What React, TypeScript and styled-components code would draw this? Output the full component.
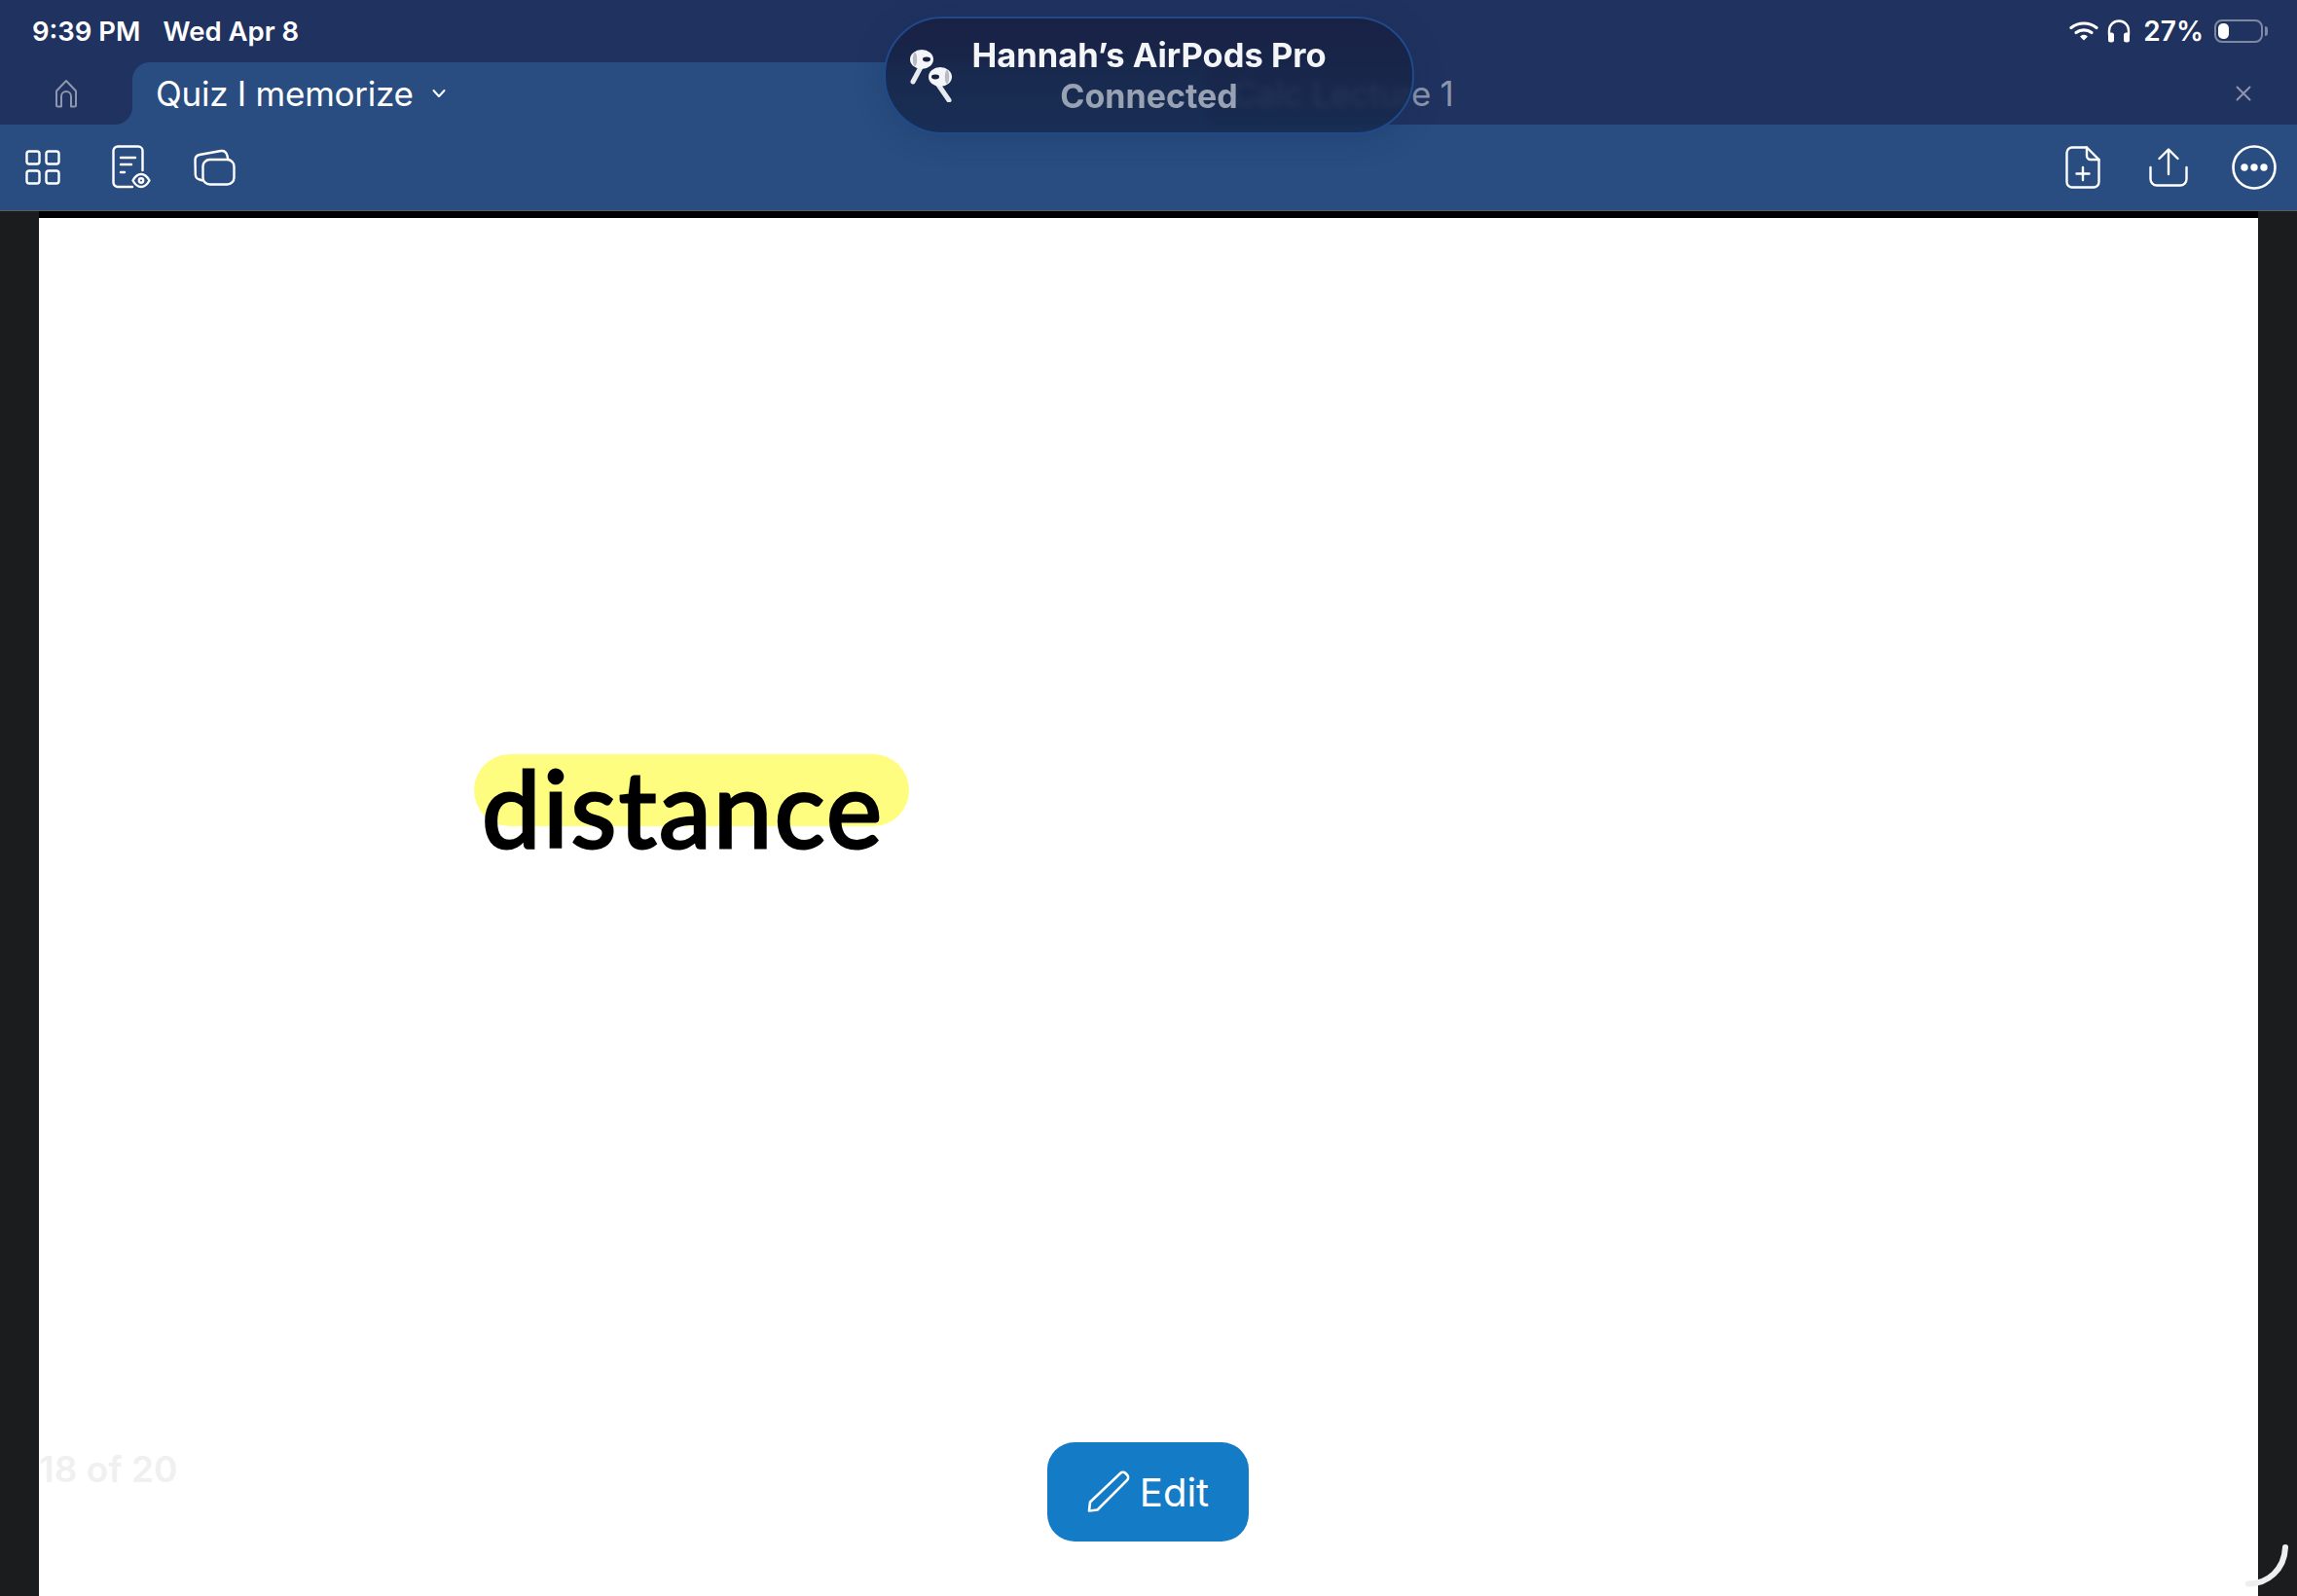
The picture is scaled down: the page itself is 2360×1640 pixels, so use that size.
import styled, { createGlobalStyle } from "styled-components";

const GlobalStyle = createGlobalStyle`
  html, body {
    margin: 0;
    padding: 0;
    width: 2360px;
    height: 1640px;
    overflow: hidden;
    background: #1b1c1e;
    font-family: "Inter", "Liberation Sans", sans-serif;
  }
`;

const Root = styled.div`
  position: relative;
  width: 2360px;
  height: 1640px;
  display: flex;
  flex-direction: column;
  overflow: hidden;
`;

const StatusBar = styled.div`
  height: 64px;
  background: #20325f;
  color: #fff;
  display: flex;
  align-items: center;
  justify-content: space-between;
  padding: 0 30px 0 33px;
  font-size: 27.5px;
  font-weight: 600;
`;

const StatusGroup = styled.div`
  display: flex;
  align-items: center;
`;

const DateText = styled.span`
  margin-left: 23px;
`;

const WifiSlot = styled.span`
  display: flex;
  margin-right: 9px;
`;

const Percent = styled.span`
  margin: 0 11px 0 13px;
  font-size: 28px;
`;

const Battery = styled.div`
  width: 50px;
  height: 24px;
  border: 2px solid rgba(255, 255, 255, 0.42);
  border-radius: 8px;
  box-sizing: border-box;
  padding: 2px;
  margin-right: 5px;
  display: flex;
  position: relative;

  &::after {
    content: "";
    position: absolute;
    right: -7px;
    top: 5px;
    width: 3px;
    height: 10px;
    background: rgba(255, 255, 255, 0.42);
    border-radius: 0 3px 3px 0;
  }
`;

const BatteryFill = styled.div`
  width: 11px;
  background: #fff;
  border-radius: 5px;
`;

const TabRow = styled.div`
  height: 64px;
  background: #20325f;
  display: flex;
  position: relative;
`;

const HomeSlot = styled.div`
  width: 136px;
  background: #294d80;
  flex: none;
`;

const HomeTab = styled.div`
  height: 100%;
  background: #20325f;
  border-bottom-right-radius: 18px;
  display: flex;
  align-items: center;
  padding-left: 56px;
  color: #8d96ad;
`;

const ActiveTab = styled.div`
  width: 1104px;
  flex: none;
  background: #294d80;
  border-top-left-radius: 18px;
  display: flex;
  align-items: center;
  padding-left: 24px;
  box-sizing: border-box;
  color: #fff;
  font-size: 35px;
  letter-spacing: -0.25px;
  gap: 19px;
`;

const InactiveTab = styled.div`
  flex: 1;
  display: flex;
  align-items: center;
  justify-content: space-between;
  padding: 0 47px 0 26px;
  color: #8d96ad;
  font-size: 35px;
  letter-spacing: -0.4px;
`;

const Toolbar = styled.div`
  height: 88px;
  background: #294d80;
  display: flex;
  justify-content: space-between;
`;

const ToolGroup = styled.div`
  display: flex;
`;

const ToolButton = styled.div<{ $width?: number }>`
  width: ${(p) => p.$width ?? 88}px;
  height: 88px;
  display: flex;
  align-items: center;
  justify-content: center;
  color: #fff;
`;

const Viewer = styled.div`
  flex: 1;
  background: #1b1c1e;
  border-top: 1px solid #5a5d63;
  padding: 0 40px;
  display: flex;
`;

const Page = styled.div`
  flex: 1;
  position: relative;
  background: #fff;
  border-top: 7px solid #000;
`;

const Highlight = styled.div`
  position: absolute;
  left: 447px;
  top: 551px;
  width: 447px;
  height: 74px;
  background: #fffd80;
  border-radius: 37px;
`;

const Ink = styled.div`
  position: absolute;
  left: 455px;
  top: 540px;
  font-family: "Lato", "Liberation Sans", sans-serif;
  font-size: 108px;
  line-height: 130px;
  letter-spacing: 2.5px;
  color: #000;
  -webkit-text-stroke: 3px #000;
`;

const Counter = styled.div`
  position: absolute;
  left: 0;
  top: 1263px;
  font-size: 37px;
  line-height: 46px;
  font-weight: 600;
  color: #f0f0f1;
`;

const EditButton = styled.div`
  position: absolute;
  left: 1036px;
  top: 1258px;
  width: 207px;
  height: 102px;
  border-radius: 28px;
  background: #147bc6;
  color: #fff;
  font-size: 40px;
  display: flex;
  align-items: center;
  justify-content: center;
  gap: 10px;
`;

const Pill = styled.div`
  position: absolute;
  left: 908px;
  top: 17px;
  width: 545px;
  height: 121px;
  box-sizing: border-box;
  border-radius: 60px;
  border: 2px solid #1f4a8c;
  background: linear-gradient(180deg, rgba(24, 32, 66, 0.9), rgba(22, 42, 78, 0.86));
  backdrop-filter: blur(3px);
  box-shadow: 0 4px 30px rgba(20, 40, 80, 0.25);
  display: grid;
  grid-template-columns: 1fr auto 1fr;
  align-items: center;
`;

const PodsSlot = styled.div`
  padding-left: 25px;
  display: flex;
`;

const PillText = styled.div`
  display: flex;
  flex-direction: column;
  align-items: center;
  font-weight: 700;
  font-size: 34.5px;
  line-height: 42px;
`;

const PillTitle = styled.span`
  color: #f4f5f8;
`;

const PillSub = styled.span`
  color: #98a2b3;
  font-size: 34px;
`;

const PencilArc = styled.svg`
  position: absolute;
  right: 0;
  bottom: 0;
`;

const HomeIcon = () => (
  <svg width="24" height="30" viewBox="0 0 24 30" fill="none" stroke="currentColor" strokeWidth="2">
    <path d="M2 27V12.5L12 2l10 10.5V27a1.5 1.5 0 0 1-1.5 1.5H17V18a5 5 0 0 0-10 0v10.500H3.500A1.500 1.500 0 0 1 2 27z" strokeLinejoin="round" />
  </svg>
);

const Chevron = () => (
  <svg width="14" height="10" viewBox="0 0 14 10" fill="none" stroke="#fff" strokeWidth="2" strokeLinecap="round" strokeLinejoin="round">
    <path d="M1.500 2l5.500 6 5.500-6" />
  </svg>
);

const GridIcon = () => (
  <svg width="36" height="36" viewBox="0 0 36 36" fill="none" stroke="currentColor" strokeWidth="2.400">
    <rect x="1.500" y="1.500" width="13" height="13" rx="2.500" />
    <rect x="21.500" y="1.500" width="13" height="13" rx="2.500" />
    <rect x="1.500" y="21.500" width="13" height="13" rx="2.500" />
    <rect x="21.500" y="21.500" width="13" height="13" rx="2.500" />
  </svg>
);

const DocEyeIcon = () => (
  <svg width="40" height="46" viewBox="0 0 40 46" fill="none" stroke="currentColor" strokeWidth="2.400" strokeLinecap="round" strokeLinejoin="round">
    <path d="M21 43H6a4.500 4.500 0 0 1-4.500-4.500V6A4.500 4.500 0 0 1 6 1.500h21A4.500 4.500 0 0 1 31.500 6v20" />
    <path d="M9 13h15M9 20h11M9 28h4" />
    <path d="M21.500 36.500c2.500-4.500 5.500-6.500 8.500-6.500s6 2 8.500 6.500c-2.500 4.500-5.500 6.500-8.500 6.500s-6-2-8.500-6.500z" />
    <circle cx="30" cy="36.500" r="2.200" />
  </svg>
);

const StackIcon = () => (
  <svg width="43" height="38" viewBox="0 0 43 38" fill="none" stroke="currentColor" strokeWidth="2.400" strokeLinejoin="round">
    <rect x="9.500" y="11" width="32" height="25.500" rx="7" />
    <path d="M9.500 32.500 6 31.500C3.500 31 2 29 1.800 26.500L1.500 12C1.400 8.500 3 6.500 6 6L28 2c3.500-.5 5.500 1.500 6.500 5l.8 4" />
  </svg>
);

const FilePlusIcon = () => (
  <svg width="36" height="44" viewBox="0 0 36 44" fill="none" stroke="currentColor" strokeWidth="2.400" strokeLinecap="round" strokeLinejoin="round">
    <path d="M22 1.500H7A5.500 5.500 0 0 0 1.500 7v30A5.500 5.500 0 0 0 7 42.500h22a5.500 5.500 0 0 0 5.500-5.500V14z" />
    <path d="M22 1.500V10a4 4 0 0 0 4 4h8.500" />
    <path d="M18 22v13M11.500 28.500h13" />
  </svg>
);

const ShareIcon = () => (
  <svg width="40" height="40" viewBox="0 0 40 40" fill="none" stroke="currentColor" strokeWidth="2.400" strokeLinecap="round" strokeLinejoin="round">
    <path d="M20 27V2M10.500 11 20 1.500 29.500 11" />
    <path d="M1.500 20v12a6.500 6.500 0 0 0 6.500 6.500h24a6.500 6.500 0 0 0 6.500-6.500V20" />
  </svg>
);

const MoreIcon = () => (
  <svg width="46" height="46" viewBox="0 0 46 46" fill="none">
    <circle cx="23" cy="23" r="21.500" stroke="currentColor" strokeWidth="2.600" />
    <circle cx="13" cy="23" r="3.700" fill="currentColor" />
    <circle cx="23" cy="23" r="3.700" fill="currentColor" />
    <circle cx="33" cy="23" r="3.700" fill="currentColor" />
  </svg>
);

const WifiIcon = () => (
  <svg width="30" height="20" viewBox="0 0 30 20" fill="none" stroke="#fff" strokeWidth="3.200" strokeLinecap="round">
    <path d="M2 6.500C9.500.5 20.500.5 28 6.500" />
    <path d="M7 11.500c4.500-3.500 11.500-3.500 16 0" />
    <path d="M15 18.500l-3-3c1.800-1.300 4.200-1.300 6 0z" fill="#fff" strokeWidth="1.500" strokeLinejoin="round" />
  </svg>
);

const HeadphonesIcon = () => (
  <svg width="24" height="24" viewBox="0 0 24 24" fill="none">
    <path d="M2 16v-4.500a10 10 0 0 1 20 0V16" stroke="#fff" strokeWidth="2.400" />
    <rect x="1" y="13.500" width="6" height="10" rx="2.500" fill="#fff" />
    <rect x="17" y="13.500" width="6" height="10" rx="2.500" fill="#fff" />
  </svg>
);

const CloseIcon = () => (
  <svg width="16" height="16" viewBox="0 0 16 16" fill="none" stroke="currentColor" strokeWidth="2" strokeLinecap="round">
    <path d="M1.500 1.500l13 13M14.500 1.500l-13 13" />
  </svg>
);

const PencilIcon = () => (
  <svg width="44" height="44" viewBox="0 0 44 44" fill="none" stroke="#fff" strokeWidth="2.600" strokeLinejoin="round">
    <path d="M2 41.500 3 32.500 34 3a4 4 0 0 1 5.500 0l1.500 1.500a4 4 0 0 1 0 5.500L10.500 40.500z" />
  </svg>
);

const AirPodsIcon = () => (
  <svg width="44" height="54" viewBox="0 0 44 54">
    <path d="M11 18 3 33" stroke="#e9eaee" strokeWidth="5" strokeLinecap="round" />
    <ellipse cx="12" cy="10" rx="12" ry="10" fill="#f4f5f8" />
    <ellipse cx="17" cy="10" rx="4" ry="2.400" fill="#15203f" />
    <ellipse cx="5" cy="10" rx="2.200" ry="7" fill="#b9bbc2" />
    <path d="M29 36 40 52" stroke="#e9eaee" strokeWidth="5" strokeLinecap="round" />
    <ellipse cx="31" cy="28" rx="12" ry="10" fill="#f4f5f8" />
    <ellipse cx="26" cy="28" rx="4" ry="2.400" fill="#15203f" />
    <ellipse cx="38" cy="28" rx="2.200" ry="7" fill="#b9bbc2" />
  </svg>
);

const App = () => {
  return (
    <Root>
      <GlobalStyle />
      <StatusBar>
        <StatusGroup>
          <span>9:39 PM</span>
          <DateText>Wed Apr 8</DateText>
        </StatusGroup>
        <StatusGroup>
          <WifiSlot>
            <WifiIcon />
          </WifiSlot>
          <HeadphonesIcon />
          <Percent>27%</Percent>
          <Battery>
            <BatteryFill />
          </Battery>
        </StatusGroup>
      </StatusBar>
      <TabRow>
        <HomeSlot>
          <HomeTab>
            <HomeIcon />
          </HomeTab>
        </HomeSlot>
        <ActiveTab>
          <span>Quiz I memorize</span>
          <Chevron />
        </ActiveTab>
        <InactiveTab>
          <span>Calc Lecture 1</span>
          <CloseIcon />
        </InactiveTab>
      </TabRow>
      <Toolbar>
        <ToolGroup>
          <ToolButton>
            <GridIcon />
          </ToolButton>
          <ToolButton $width={94}>
            <DocEyeIcon />
          </ToolButton>
          <ToolButton $width={76}>
            <StackIcon />
          </ToolButton>
        </ToolGroup>
        <ToolGroup>
          <ToolButton>
            <FilePlusIcon />
          </ToolButton>
          <ToolButton>
            <ShareIcon />
          </ToolButton>
          <ToolButton>
            <MoreIcon />
          </ToolButton>
        </ToolGroup>
      </Toolbar>
      <Viewer>
        <Page>
          <Highlight />
          <Ink>distance</Ink>
          <Counter>18 of 20</Counter>
          <EditButton>
            <PencilIcon />
            <span>Edit</span>
          </EditButton>
        </Page>
      </Viewer>
      <Pill>
        <PodsSlot>
          <AirPodsIcon />
        </PodsSlot>
        <PillText>
          <PillTitle>Hannah’s AirPods Pro</PillTitle>
          <PillSub>Connected</PillSub>
        </PillText>
      </Pill>
      <PencilArc width="60" height="60" viewBox="0 0 60 60" fill="none">
        <path d="M10 47.500C30 47.500 47 33 48 10" stroke="#eeeeef" strokeWidth="6" strokeLinecap="round" />
      </PencilArc>
    </Root>
  );
};

export default App;
